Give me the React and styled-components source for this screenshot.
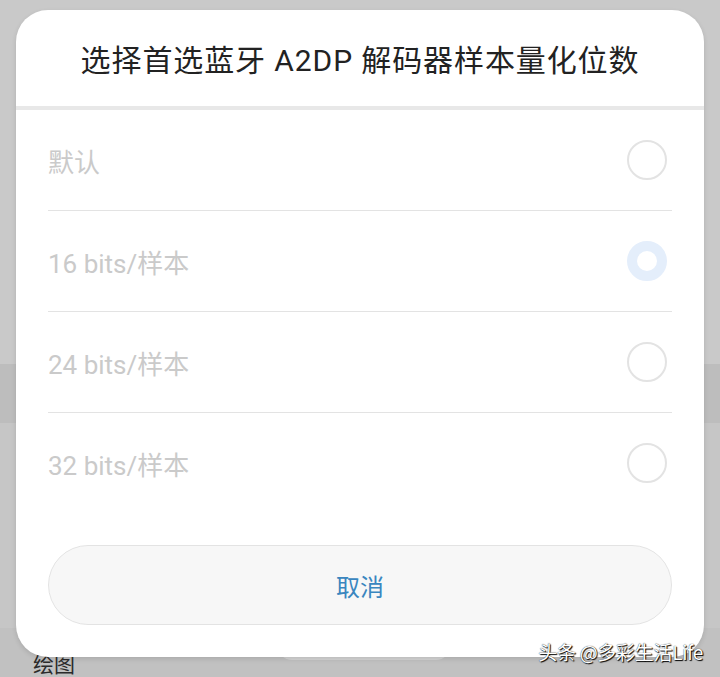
import React from "react";
import styled, { createGlobalStyle } from "styled-components";

const Global = createGlobalStyle`
  html, body { margin: 0; padding: 0; }
  body { background: #c8c8c8; font-family: Roboto, "Noto Sans CJK SC", sans-serif; }
`;

const Page = styled.div`
  position: relative;
  width: 720px;
  height: 677px;
  overflow: hidden;
`;

const Backdrop = styled.div`
  height: 100%;
  display: flex;
  flex-direction: column;
  justify-content: flex-end;
  background: linear-gradient(
    to bottom,
    #c9c9c9 0px,
    #c9c9c9 364px,
    #bdbdbd 364px,
    #bdbdbd 423px,
    #c6c6c6 423px,
    #c6c6c6 628px,
    #c1c1c1 628px,
    #c1c1c1 100%
  );
`;

const BottomBar = styled.div`
  display: flex;
  align-items: flex-start;
  height: 27px;
  padding-left: 33px;
  position: relative;
`;

const BarLabel = styled.span`
  font-family: "Noto Sans CJK SC", sans-serif;
  font-size: 21px;
  line-height: 24px;
  color: #2b2b2b;
  margin-top: 1px;
`;

const BarPill = styled.div`
  width: 172px;
  height: 14px;
  margin-left: 203px;
  margin-top: -4px;
  border-radius: 0 0 14px 14px;
  background: #d4d4d4;
`;

const Overlay = styled.div`
  position: absolute;
  inset: 0;
  padding: 10px 16px 0;
`;

const Dialog = styled.div`
  width: 688px;
  height: 647px;
  background: #fff;
  border-radius: 32px;
  box-shadow: 0 2px 5px rgba(0, 0, 0, 0.12);
  display: flex;
  flex-direction: column;
  overflow: hidden;
`;

const Header = styled.div`
  height: 96px;
  display: flex;
  align-items: center;
  justify-content: center;
  border-bottom: 4px solid #e8e8e8;
  flex-shrink: 0;
`;

const Title = styled.h1`
  margin: 0;
  font-family: Roboto, "Noto Sans CJK SC", sans-serif;
  font-weight: 400;
  font-size: 30px;
  color: #222;
  letter-spacing: 0.9px;
`;

const List = styled.div`
  padding: 0 32px;
  display: flex;
  flex-direction: column;
`;

const Row = styled.div`
  height: 100px;
  display: flex;
  align-items: center;
  justify-content: space-between;
  border-bottom: ${(p) => (p.$last ? "none" : "1px solid #e3e3e3")};
`;

const RowLabel = styled.span`
  font-family: Roboto, "Noto Sans CJK SC", sans-serif;
  font-size: 26px;
  color: #cacaca;
`;

const Radio = styled.span`
  box-sizing: border-box;
  width: 40px;
  height: 40px;
  margin-right: 5px;
  border-radius: 50%;
  background: #fff;
  border: ${(p) => (p.$checked ? "10px solid #e4eefb" : "2px solid #e3e3e3")};
`;

const Footer = styled.div`
  padding: 32px 32px 32px;
  margin-top: auto;
`;

const CancelButton = styled.button`
  box-sizing: border-box;
  width: 100%;
  height: 80px;
  border-radius: 40px;
  border: 1px solid #e3e3e3;
  background: #f7f7f7;
  font-family: "Noto Sans CJK SC", sans-serif;
  font-size: 24px;
  color: #3a86bf;
  cursor: pointer;
`;

const Watermark = styled.div`
  position: absolute;
  right: 17px;
  top: 639px;
  font-family: "Noto Sans CJK SC", sans-serif;
  font-size: 19px;
  line-height: 26px;
  color: #fff;
  text-shadow: 1px 1px 1px #000, 0 0 1px #000;
  letter-spacing: -0.3px;
`;

const options = [
  { label: "默认", checked: false },
  { label: "16 bits/样本", checked: true },
  { label: "24 bits/样本", checked: false },
  { label: "32 bits/样本", checked: false },
];

export default function App() {
  return (
    <>
      <Global />
      <Page>
        <Backdrop>
          <BottomBar>
            <BarLabel>绘图</BarLabel>
            <BarPill />
          </BottomBar>
        </Backdrop>
        <Overlay>
          <Dialog>
            <Header>
              <Title>选择首选蓝牙 A2DP 解码器样本量化位数</Title>
            </Header>
            <List>
              {options.map((o, i) => (
                <Row key={o.label} $last={i === options.length - 1}>
                  <RowLabel>{o.label}</RowLabel>
                  <Radio $checked={o.checked} />
                </Row>
              ))}
            </List>
            <Footer>
              <CancelButton>取消</CancelButton>
            </Footer>
          </Dialog>
        </Overlay>
        <Watermark>头条 @多彩生活Life</Watermark>
      </Page>
    </>
  );
}
